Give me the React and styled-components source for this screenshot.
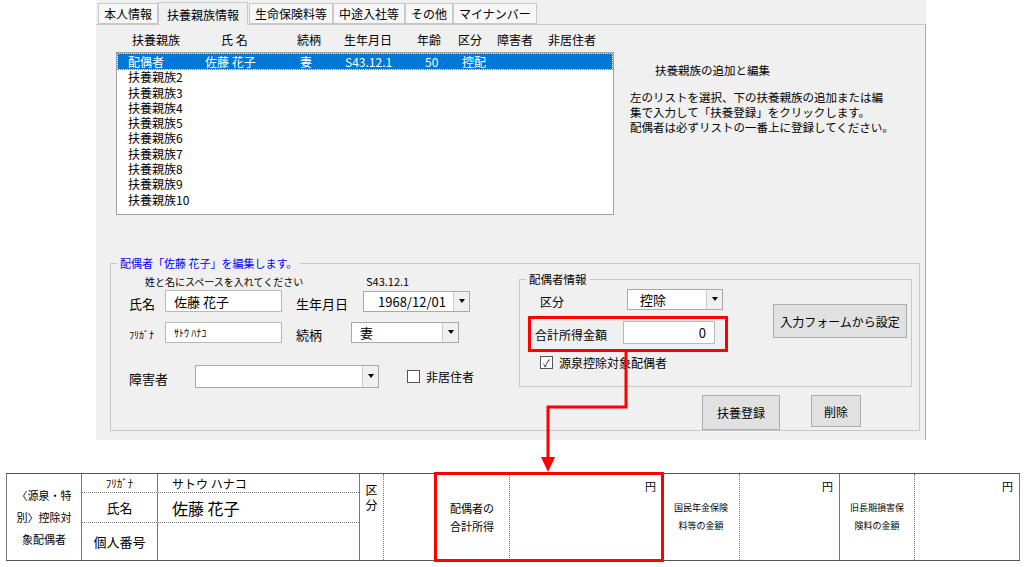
import React from 'react';
import styled, { createGlobalStyle } from 'styled-components';

const Global = createGlobalStyle`
  html, body { margin: 0; padding: 0; background: #fff; }
  body { font-family: "Noto Sans CJK JP", "Liberation Sans", sans-serif; color: #000; }
`;

const Page = styled.div`
  position: relative;
  width: 1024px;
  height: 567px;
  overflow: hidden;
`;

const Dialog = styled.div`
  margin-left: 96px;
  width: 830px;
  height: 440px;
  background: #f0f0f0;
  display: flex;
  flex-direction: column;
  font-size: 12px;
`;

const TabStrip = styled.div`
  display: flex;
  align-items: flex-end;
  height: 24px;
  padding-left: 2px;
`;

const Tab = styled.div`
  height: ${p => (p.$active ? 22 : 19)}px;
  padding: 0 ${p => (p.$active ? 8 : 5)}px;
  border: 1px solid #c8c8c8;
  border-bottom: ${p => (p.$active ? 'none' : '1px solid #c8c8c8')};
  background: ${p => (p.$active ? '#f0f0f0' : '#f7f7f7')};
  margin-right: ${p => (p.$active ? 1 : 0)}px;
  display: flex;
  align-items: center;
  font-size: 12px;
  white-space: nowrap;
  ${p => p.$active && 'margin-bottom: -1px; position: relative; z-index: 1;'}
`;

const Body = styled.div`
  flex: 1;
  border-top: 1px solid #c8c8c8;
  border-right: 1px solid #aaa;
  padding: 4px 0 0 20px;
`;

const TopRow = styled.div`
  display: flex;
`;

const ListCol = styled.div`
  width: 498px;
`;

const HeadRow = styled.div`
  display: flex;
  height: 20px;
  align-items: center;
`;

const Cell = styled.span`
  width: ${p => p.$w}px;
  padding-left: ${p => p.$pl || 0}px;
  flex: none;
  white-space: nowrap;
`;

const ListBox = styled.div`
  margin-top: 3px;
  height: 159px;
  background: #fff;
  border: 1px solid #a0a0a0;
  padding: 1px;
`;

const ListRow = styled.div`
  display: flex;
  height: 15.3px;
  line-height: 15.3px;
  padding-left: 10px;
  background: ${p => (p.$sel ? '#0078d7' : 'transparent')};
  color: ${p => (p.$sel ? '#fff' : '#000')};
  outline: ${p => (p.$sel ? '1px dotted #c07020' : 'none')};
`;

const Help = styled.div`
  margin-left: 16px;
  padding-top: 34px;
  font-size: 11.5px;
  line-height: 15px;
`;

const HelpTitle = styled.div`
  padding-left: 25px;
  margin-bottom: 12px;
`;

const Group = styled.fieldset`
  margin: 40px 0 0 -6px;
  width: 810px;
  min-width: 0;
  height: 176px;
  border: 1px solid #c8c8c8;
  padding: 0 8px 0 18px;
  box-sizing: border-box;
  display: flex;
`;

const Legend = styled.legend`
  color: #0000ff;
  font-size: 11px;
  padding: 0 3px;
  margin-left: -12px;
`;

const LeftForm = styled.div`
  width: 390px;
  flex: none;
  display: flex;
  flex-direction: column;
`;

const Hint = styled.div`
  display: flex;
  font-size: 10px;
  height: 16px;
  align-items: center;
  margin-top: 2px;
`;

const FormRow = styled.div`
  display: flex;
  align-items: center;
  height: ${p => p.$h || 26}px;
  margin-top: ${p => p.$mt || 0}px;
`;

const Label = styled.span`
  width: ${p => p.$w}px;
  flex: none;
  font-size: ${p => p.$fs || 13}px;
  padding-top: 5px;
  white-space: nowrap;
`;

const TextBox = styled.div`
  width: ${p => p.$w}px;
  height: ${p => p.$h || 21}px;
  box-sizing: border-box;
  background: #fff;
  border: 1px solid #b8b8b8;
  display: flex;
  align-items: center;
  justify-content: ${p => (p.$right ? 'flex-end' : 'flex-start')};
  padding: 0 8px;
  font-size: ${p => p.$fs || 13}px;
  flex: none;
`;

const Combo = styled.div`
  width: ${p => p.$w}px;
  height: ${p => p.$h || 21}px;
  box-sizing: border-box;
  background: #fff;
  border: 1px solid #a8a8a8;
  display: flex;
  align-items: center;
  font-size: 13px;
  flex: none;
`;

const ComboText = styled.span`
  flex: 1;
  padding-left: ${p => p.$pl || 8}px;
`;

const Arrow = styled.span`
  width: 15px;
  height: 100%;
  border-left: 1px solid #ccc;
  background: #f0f0f0;
  display: flex;
  align-items: center;
  justify-content: center;
  &::after {
    content: '';
    border-left: 3px solid transparent;
    border-right: 3px solid transparent;
    border-top: 4px solid #000;
  }
`;

const Check = styled.span`
  width: 11px;
  height: 11px;
  border: 1px solid #555;
  background: #fff;
  margin-right: 6px;
  font-size: 10px;
  line-height: 11px;
  text-align: center;
  flex: none;
`;

const RightArea = styled.div`
  display: flex;
  flex-direction: column;
`;

const InnerGroup = styled.fieldset`
  width: 393px;
  min-width: 0;
  height: 117px;
  margin: 0;
  border: 1px solid #c8c8c8;
  padding: 0 0 0 20px;
  box-sizing: border-box;
  display: flex;
`;

const InnerLegend = styled.legend`
  font-size: 11.5px;
  padding: 0 3px;
  margin-left: -14px;
`;

const Button = styled.div`
  width: ${p => p.$w}px;
  height: ${p => p.$h}px;
  box-sizing: border-box;
  border: 1px solid #adadad;
  background: #e1e1e1;
  display: flex;
  align-items: center;
  justify-content: center;
  font-size: 12px;
  flex: none;
`;

const Buttons = styled.div`
  display: flex;
  gap: 31px;
  margin: 8px 0 0 183px;
`;

/* paper form */
const Sheet = styled.div`
  margin: 33px 0 0 6px;
  width: 1014px;
  border-top: 1.5px solid #555;
  border-bottom: 1.5px solid #555;
  display: grid;
  grid-template-columns: 76px 76px 202px 24px 51px 75px 153px 77px 100px 75px 105px;
  height: 86px;
  font-size: 11px;
`;

const Col = styled.div`
  border-right: 1px ${p => (p.$dot ? 'dotted' : 'solid')} #777;
  border-left: ${p => (p.$first ? '1px solid #777' : 'none')};
  display: flex;
  flex-direction: column;
  align-items: ${p => p.$align || 'center'};
  justify-content: ${p => p.$justify || 'center'};
  text-align: center;
  line-height: ${p => p.$lh || 20}px;
  font-size: ${p => p.$fs || 11}px;
  padding: ${p => p.$pad || 0};
  box-sizing: border-box;
`;

const SubCells = styled.div`
  display: grid;
  grid-template-rows: 19px 30px 1fr;
  border-right: 1px solid #777;
  grid-column: span 2;
`;

const Sub = styled.div`
  display: grid;
  grid-template-columns: 76px 1fr;
  border-bottom: ${p => (p.$last ? 'none' : '1px dotted #777')};
`;

const SubLabel = styled.div`
  border-right: 1px solid #777;
  display: flex;
  align-items: center;
  justify-content: center;
  font-size: ${p => p.$fs || 13}px;
`;

const SubValue = styled.div`
  display: flex;
  align-items: center;
  padding-left: 14px;
  font-size: ${p => p.$fs || 13}px;
`;

const RedBox = styled.div`
  position: absolute;
  border: 3px solid #ff0000;
  box-sizing: border-box;
`;

const Connector = styled.svg`
  position: absolute;
  left: 0;
  top: 0;
  pointer-events: none;
`;

const listRows = ['扶養親族2', '扶養親族3', '扶養親族4', '扶養親族5', '扶養親族6', '扶養親族7', '扶養親族8', '扶養親族9', '扶養親族10'];

export default function App() {
  return (
    <Page>
      <Global />
      <Dialog>
        <TabStrip>
          <Tab>本人情報</Tab>
          <Tab $active>扶養親族情報</Tab>
          <Tab>生命保険料等</Tab>
          <Tab>中途入社等</Tab>
          <Tab>その他</Tab>
          <Tab>マイナンバー</Tab>
        </TabStrip>
        <Body>
          <TopRow>
            <ListCol>
              <HeadRow>
                <Cell $w={89} $pl={16}>扶養親族</Cell>
                <Cell $w={76}>氏&nbsp;名</Cell>
                <Cell $w={47}>続柄</Cell>
                <Cell $w={73}>生年月日</Cell>
                <Cell $w={41}>年齢</Cell>
                <Cell $w={39}>区分</Cell>
                <Cell $w={51}>障害者</Cell>
                <Cell $w={60}>非居住者</Cell>
              </HeadRow>
              <ListBox>
                <ListRow $sel>
                  <Cell $w={77}>配偶者</Cell>
                  <Cell $w={95}>佐藤 花子</Cell>
                  <Cell $w={45}>妻</Cell>
                  <Cell $w={80}>S43.12.1</Cell>
                  <Cell $w={37}>50</Cell>
                  <Cell $w={40}>控配</Cell>
                </ListRow>
                {listRows.map(r => (
                  <ListRow key={r}>{r}</ListRow>
                ))}
              </ListBox>
            </ListCol>
            <Help>
              <HelpTitle>扶養親族の追加と編集</HelpTitle>
              <div>左のリストを選択、下の扶養親族の追加または編</div>
              <div>集で入力して「扶養登録」をクリックします。</div>
              <div>配偶者は必ずリストの一番上に登録してください。</div>
            </Help>
          </TopRow>
          <Group>
            <Legend>配偶者「佐藤 花子」を編集します。</Legend>
            <LeftForm>
              <Hint>
                <Cell $w={221} $pl={16}>姓と名にスペースを入れてください</Cell>
                <Cell $w={60} style={{ fontSize: 11 }}>S43.12.1</Cell>
              </Hint>
              <FormRow $h={24}>
                <Label $w={36}>氏名</Label>
                <TextBox $w={117} $h={22}>佐藤 花子</TextBox>
                <Label $w={67} style={{ paddingLeft: 14 }}>生年月日</Label>
                <Combo $w={107}>
                  <ComboText $pl={14}>1968/12/01</ComboText>
                  <Arrow />
                </Combo>
              </FormRow>
              <FormRow $h={24} $mt={7}>
                <Label $w={36} $fs={10}>ﾌﾘｶﾞﾅ</Label>
                <TextBox $w={117} $fs={10}>ｻﾄｳ ﾊﾅｺ</TextBox>
                <Label $w={55} style={{ paddingLeft: 14 }}>続柄</Label>
                <Combo $w={108}>
                  <ComboText>妻</ComboText>
                  <Arrow />
                </Combo>
              </FormRow>
              <FormRow $h={24} $mt={20}>
                <Label $w={66}>障害者</Label>
                <Combo $w={184} $h={23}>
                  <ComboText />
                  <Arrow />
                </Combo>
                <Check style={{ marginLeft: 28 }} />
                <span>非居住者</span>
              </FormRow>
            </LeftForm>
            <RightArea>
              <InnerGroup>
                <InnerLegend>配偶者情報</InnerLegend>
                <LeftForm style={{ width: 220 }}>
                  <FormRow $h={24} $mt={0}>
                    <Label $w={87} $fs={12}>区分</Label>
                    <Combo $w={96}>
                      <ComboText $pl={12}>控除</ComboText>
                      <Arrow />
                    </Combo>
                  </FormRow>
                  <FormRow $h={24} $mt={9}>
                    <Label $w={88} $fs={12} style={{ marginLeft: -5 }}>合計所得金額</Label>
                    <TextBox $w={92} $h={23} $right>0</TextBox>
                  </FormRow>
                  <FormRow $h={20} $mt={8}>
                    <Check>✓</Check>
                    <span>源泉控除対象配偶者</span>
                  </FormRow>
                </LeftForm>
                <Button $w={134} $h={34} style={{ marginTop: 17, marginLeft: 13 }}>入力フォームから設定</Button>
              </InnerGroup>
              <Buttons>
                <Button $w={78} $h={35}>扶養登録</Button>
                <Button $w={50} $h={32}>削除</Button>
              </Buttons>
            </RightArea>
          </Group>
        </Body>
      </Dialog>

      <Sheet>
        <Col $first $fs={11} $lh={22}>〈源泉・特<br />別〉控除対<br />象配偶者</Col>
        <SubCells>
          <Sub>
            <SubLabel $fs={11}>ﾌﾘｶﾞﾅ</SubLabel>
            <SubValue $fs={12}>サトウ ハナコ</SubValue>
          </Sub>
          <Sub>
            <SubLabel>氏名</SubLabel>
            <SubValue $fs={16}>佐藤 花子</SubValue>
          </Sub>
          <Sub $last>
            <SubLabel>個人番号</SubLabel>
            <SubValue />
          </Sub>
        </SubCells>
        <Col $dot $justify="flex-start" $lh={15} $fs={12} $pad="8px 0 0">区<br />分</Col>
        <Col />
        <Col $dot $fs={11} $lh={18}>配偶者の<br />合計所得</Col>
        <Col $align="flex-end" $justify="flex-start" $pad="2px 6px 0 0">円</Col>
        <Col $dot $fs={9} $lh={18}>国民年金保険<br />料等の金額</Col>
        <Col $align="flex-end" $justify="flex-start" $pad="2px 6px 0 0">円</Col>
        <Col $dot $fs={9} $lh={18}>旧長期損害保<br />険料の金額</Col>
        <Col $align="flex-end" $justify="flex-start" $pad="2px 6px 0 0">円</Col>
      </Sheet>

      <RedBox style={{ left: 528, top: 316, width: 200, height: 36 }} />
      <RedBox style={{ left: 434, top: 472, width: 230, height: 90 }} />
      <Connector width="1024" height="567">
        <polyline points="626,352 626,407 548,407 548,458" fill="none" stroke="#ff0000" strokeWidth="3" />
        <polygon points="541,457 555,457 548,472" fill="#ff0000" />
      </Connector>
    </Page>
  );
}
